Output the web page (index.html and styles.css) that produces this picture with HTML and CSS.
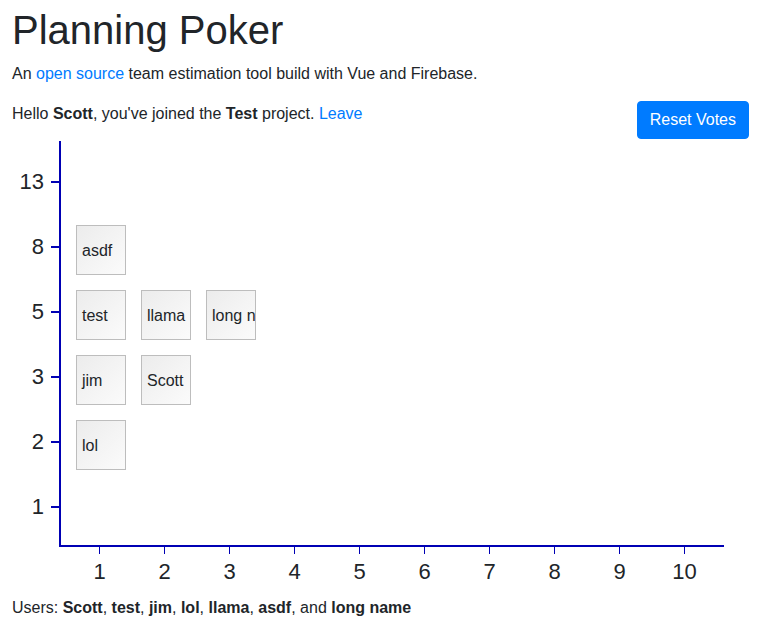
FILE: index.html
```html
<!DOCTYPE html>
<html>
<head>
<meta charset="utf-8">
<title>Planning Poker</title>
<link rel="stylesheet" href="styles.css">
</head>
<body>
<div class="container">
  <h1 class="title">Planning Poker</h1>
  <p class="intro">An <a href="#">open source</a> team estimation tool build with Vue and Firebase.</p>
  <div class="status-row">
    <p class="hello">Hello <b>Scott</b>, you've joined the <b>Test</b> project. <a href="#">Leave</a></p>
    <button class="btn">Reset Votes</button>
  </div>

  <div class="chart">
    <div class="y-axis">
      <div class="y-row"><span class="y-label">13</span><span class="y-tick"></span></div>
      <div class="y-row"><span class="y-label">8</span><span class="y-tick"></span></div>
      <div class="y-row"><span class="y-label">5</span><span class="y-tick"></span></div>
      <div class="y-row"><span class="y-label">3</span><span class="y-tick"></span></div>
      <div class="y-row"><span class="y-label">2</span><span class="y-tick"></span></div>
      <div class="y-row"><span class="y-label">1</span><span class="y-tick"></span></div>
    </div>
    <div class="plot">
      <div class="cell c1 r8"><div class="card">asdf</div></div>
      <div class="cell c1 r5"><div class="card">test</div></div>
      <div class="cell c2 r5"><div class="card">llama</div></div>
      <div class="cell c3 r5"><div class="card">long name</div></div>
      <div class="cell c1 r3"><div class="card">jim</div></div>
      <div class="cell c2 r3"><div class="card">Scott</div></div>
      <div class="cell c1 r2"><div class="card">lol</div></div>
    </div>
    <div class="x-axis">
      <div class="x-col"><span class="x-tick"></span><span class="x-label">1</span></div>
      <div class="x-col"><span class="x-tick"></span><span class="x-label">2</span></div>
      <div class="x-col"><span class="x-tick"></span><span class="x-label">3</span></div>
      <div class="x-col"><span class="x-tick"></span><span class="x-label">4</span></div>
      <div class="x-col"><span class="x-tick"></span><span class="x-label">5</span></div>
      <div class="x-col"><span class="x-tick"></span><span class="x-label">6</span></div>
      <div class="x-col"><span class="x-tick"></span><span class="x-label">7</span></div>
      <div class="x-col"><span class="x-tick"></span><span class="x-label">8</span></div>
      <div class="x-col"><span class="x-tick"></span><span class="x-label">9</span></div>
      <div class="x-col"><span class="x-tick"></span><span class="x-label">10</span></div>
    </div>
  </div>

  <p class="users">Users: <b>Scott</b>, <b>test</b>, <b>jim</b>, <b>lol</b>, <b>llama</b>, <b>asdf</b>, and <b>long name</b></p>
</div>
</body>
</html>
```

FILE: styles.css
```css
* { box-sizing: border-box; }

html, body {
  margin: 0;
  padding: 0;
  background: #fff;
}

body {
  font-family: "Liberation Sans", Arial, sans-serif;
  font-size: 16px;
  line-height: 1.5;
  color: #212529;
}

a {
  color: #007bff;
  text-decoration: none;
}

.container {
  padding: 6px 12px 0 12px;
}

.title {
  margin: 0 0 8px 0;
  font-size: 40px;
  font-weight: 400;
  line-height: 1.2;
}

.intro {
  margin: 0 0 15px 0;
}

.status-row {
  display: flex;
  justify-content: space-between;
  align-items: flex-start;
}

.hello {
  margin: 1px 0 0 0;
}

.btn {
  font-family: inherit;
  font-size: 16px;
  line-height: 24px;
  color: #fff;
  background: #007bff;
  border: 1px solid #007bff;
  border-radius: 4px;
  padding: 6px 12px;
  cursor: pointer;
}

/* chart */
.chart {
  margin-top: 2px;
  display: grid;
  grid-template-columns: 47px 665px;
  grid-template-rows: 406px auto;
}

.y-axis {
  padding-top: 8px;
  display: flex;
  flex-direction: column;
}

.y-row {
  height: 65px;
  display: flex;
  align-items: center;
  justify-content: flex-end;
}

.y-label {
  font-size: 22px;
  line-height: 25px;
  margin-right: 7px;
}

.y-tick {
  width: 8px;
  height: 2px;
  background: #0000b4;
}

.plot {
  border-left: 2px solid #0000b4;
  border-bottom: 2px solid #0000b4;
  padding: 8px 0 0 6px;
  display: grid;
  grid-template-columns: repeat(10, 65px);
  grid-template-rows: repeat(6, 65px);
}

.cell {
  padding: 11px 0 0 9px;
}

.c1 { grid-column: 1; }
.c2 { grid-column: 2; }
.c3 { grid-column: 3; }
.r13 { grid-row: 1; }
.r8 { grid-row: 2; }
.r5 { grid-row: 3; }
.r3 { grid-row: 4; }
.r2 { grid-row: 5; }
.r1 { grid-row: 6; }

.card {
  width: 50px;
  height: 50px;
  border: 1px solid #bdbdbd;
  background: linear-gradient(135deg, #ececec 0%, #fbfbfb 100%);
  display: flex;
  align-items: center;
  padding: 2px 0 0 5px;
  font-size: 16px;
  white-space: nowrap;
  overflow: hidden;
}

.x-axis {
  grid-column: 2;
  padding-left: 8px;
  display: flex;
}

.x-col {
  width: 65px;
  display: flex;
  flex-direction: column;
  align-items: center;
}

.x-tick {
  width: 1px;
  height: 7px;
  background: #0000b4;
  margin-bottom: 5px;
}

.x-label {
  font-size: 22px;
  line-height: 25px;
}

.users {
  margin: 12px 0 0 0;
  font-size: 16px;
  line-height: 24px;
}
```
